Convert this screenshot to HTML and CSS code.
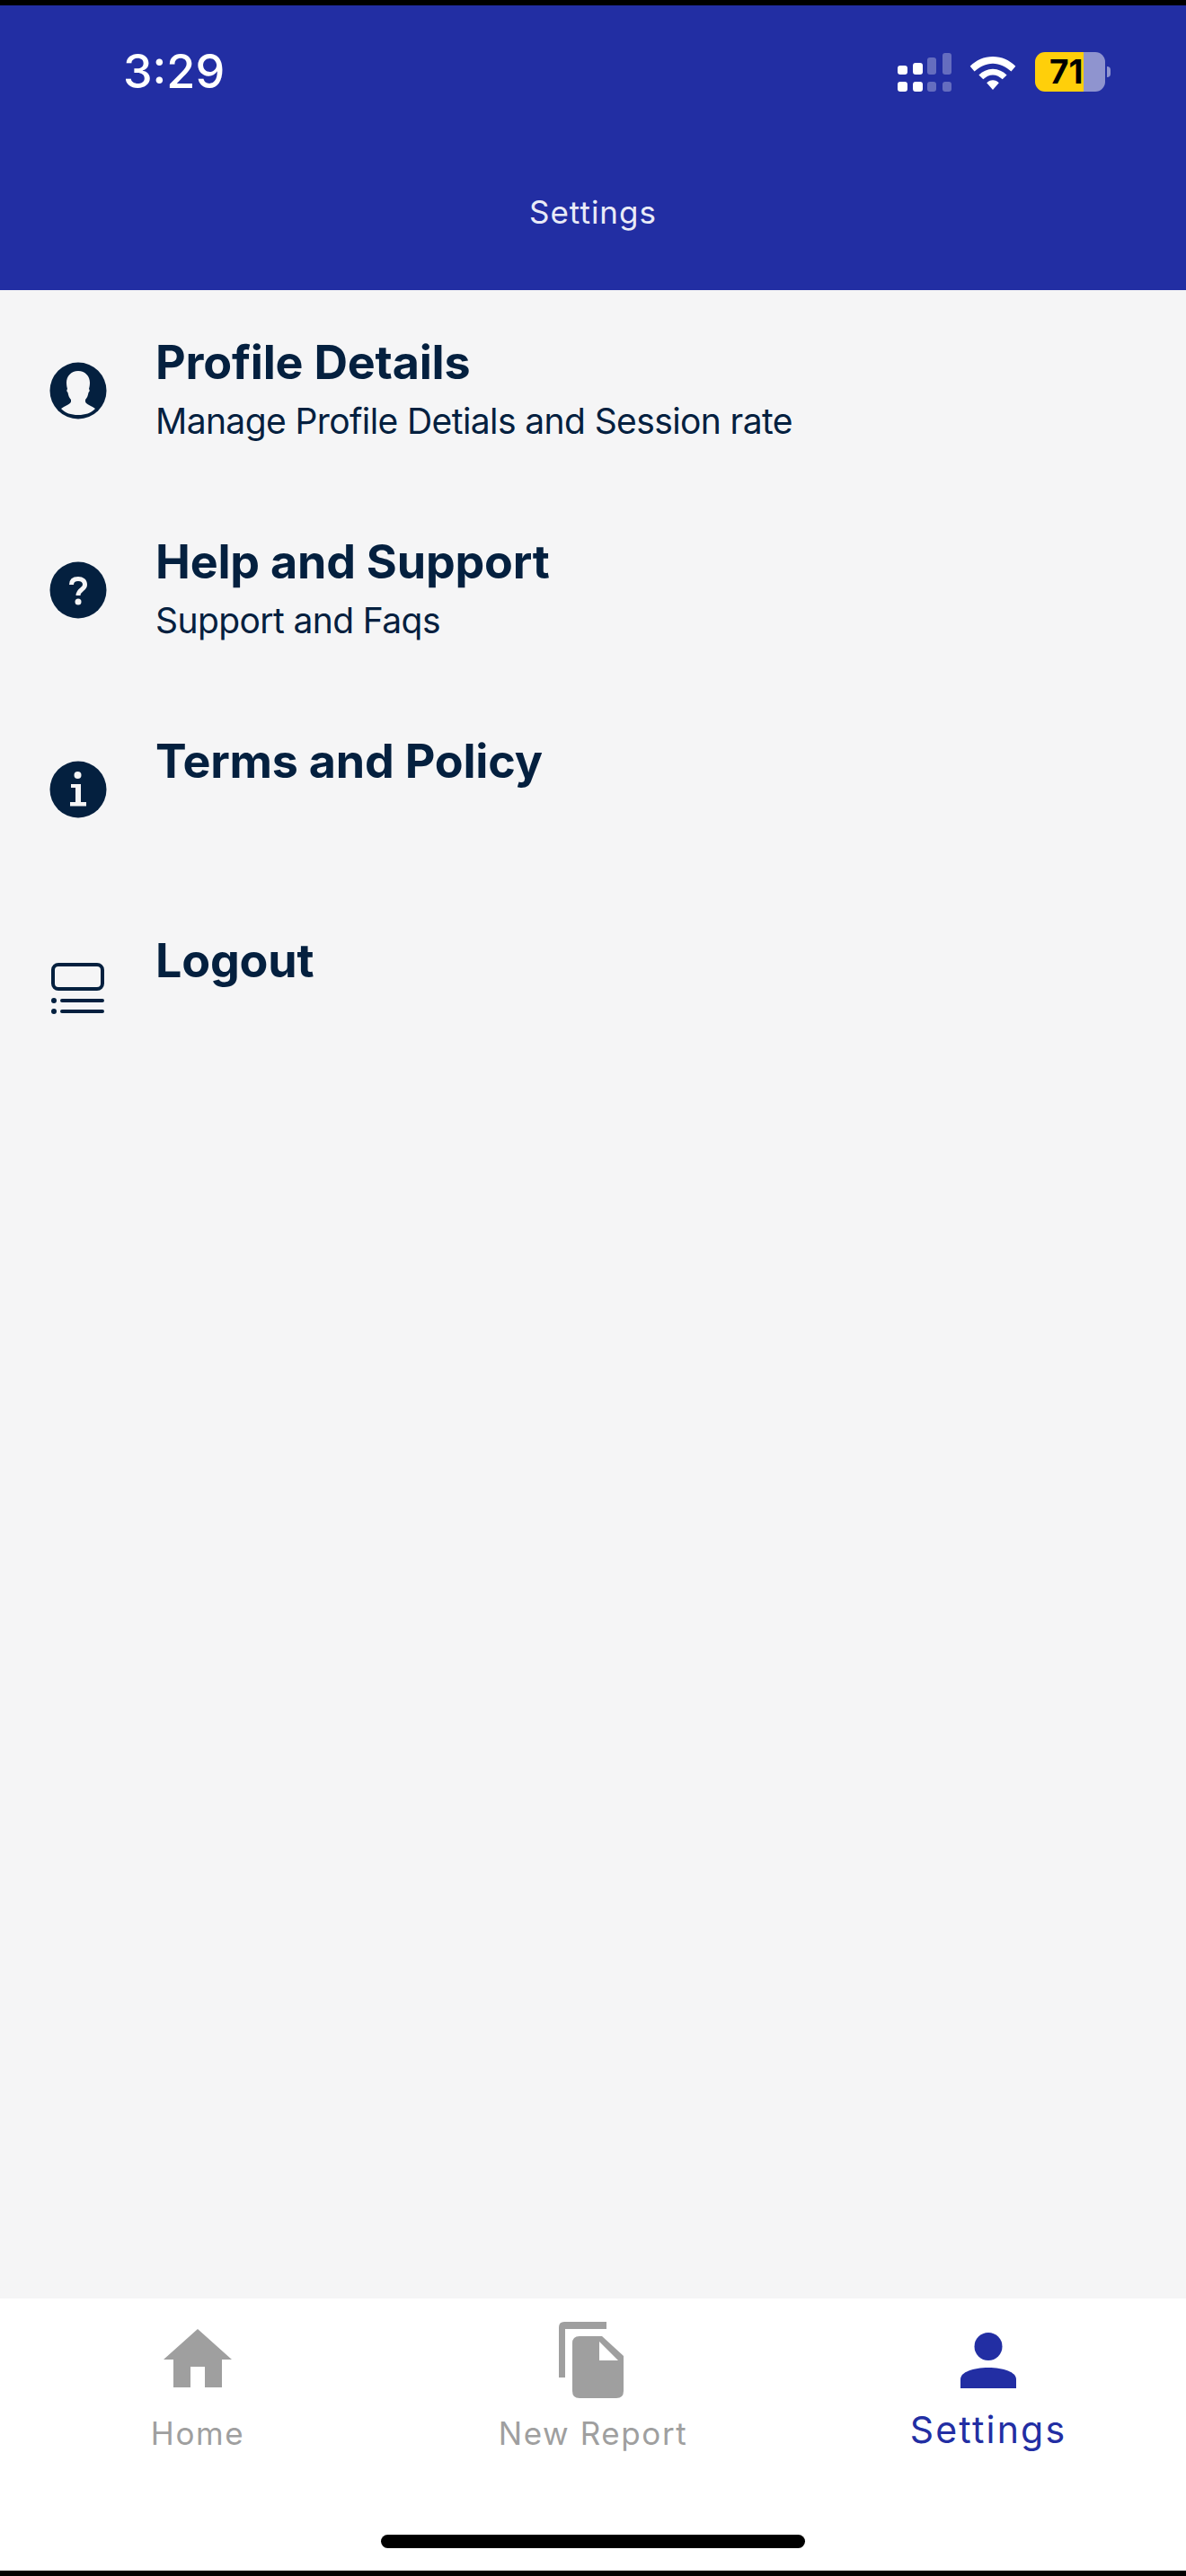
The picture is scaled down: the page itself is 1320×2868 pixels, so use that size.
FILE: index.html
```html
<!DOCTYPE html>
<html lang="en">
<head>
<meta charset="utf-8">
<title>Settings</title>
<link rel="stylesheet" href="styles.css">
</head>
<body>
<div class="screen">
  <header class="top">
    <div class="status">
      <span class="time">3:29</span>
      <div class="status-icons">
        <svg class="signal" width="60" height="43" viewBox="0 0 60 43">
          <g fill="#fff">
            <rect x="0" y="14" width="11" height="10" rx="3"/><rect x="17" y="11" width="11" height="13" rx="3"/>
            <rect x="0" y="32" width="11" height="11" rx="3"/><rect x="17" y="32" width="11" height="11" rx="3"/>
          </g>
          <g fill="#fff" opacity=".3">
            <rect x="33" y="5" width="10" height="19" rx="3"/><rect x="50" y="0" width="10" height="24" rx="3"/>
            <rect x="33" y="32" width="10" height="11" rx="3"/><rect x="50" y="32" width="10" height="11" rx="3"/>
          </g>
        </svg>
        <svg class="wifi" width="52" height="37" viewBox="0 0 52 38">
          <path fill="#fff" d="M26 0C16 0 7 4 0 11l5 6c6-5 13-9 21-9s15 4 21 9l5-6C45 4 36 0 26 0z"/>
          <path fill="#fff" d="M26 14c-6 0-12 3-16 7l5 5c3-3 7-5 11-5s8 2 11 5l5-5c-4-4-10-7-16-7z"/>
          <path fill="#fff" d="M26 27c-3 0-5 1-7 3l7 8 7-8c-2-2-4-3-7-3z"/>
        </svg>
        <div class="battery">
          <div class="batt-body"><span class="batt-num">71</span></div>
          <span class="batt-cap"></span>
        </div>
      </div>
    </div>
    <h1 class="title">Settings</h1>
  </header>

  <main class="list">
    <div class="row">
      <svg class="icon" width="66" height="66" viewBox="0 0 66 66">
        <circle cx="33" cy="33" r="31.5" fill="#04203f"/>
        <path fill="#f5f5f6" d="M33 11C25 11 20 17 20 24C20 27 20.500 29 21 31C20 32 20 34 21.500 35C22 38 23 41 25 43V45C25 47 21 49 17 51L14 53C19 58 25 60 33 60C41 60 47 58 52 53L49 51C45 49 41 47 41 45V43C43 41 44 38 44.500 35C46 34 46 32 45 31C45.500 29 46 27 46 24C46 17 41 11 33 11Z"/>
      </svg>
      <div class="text">
        <h2 class="head">Profile Details</h2>
        <p class="sub">Manage Profile Detials and Session rate</p>
      </div>
    </div>
    <div class="row">
      <svg class="icon" width="66" height="66" viewBox="0 0 66 66">
        <circle cx="33" cy="33" r="31.5" fill="#04203f"/>
        <path fill="none" stroke="#f5f5f6" stroke-width="5" d="M25.500 27c0-4.500 3-6.500 7.500-6.500s7.500 2.500 7.500 6.500c0 5.500-7.500 5-7.500 12"/>
        <circle cx="33" cy="46" r="3.500" fill="#f5f5f6"/>
      </svg>
      <div class="text">
        <h2 class="head">Help and Support</h2>
        <p class="sub">Support and Faqs</p>
      </div>
    </div>
    <div class="row">
      <svg class="icon" width="66" height="66" viewBox="0 0 66 66">
        <circle cx="33" cy="33" r="31.5" fill="#04203f"/>
        <circle cx="32.500" cy="17" r="4" fill="#f5f5f6"/>
        <path fill="#f5f5f6" d="M25 27h11v20h6v4.500H24V47h6V31h-5z"/>
      </svg>
      <div class="text"><h2 class="head">Terms and Policy</h2></div>
    </div>
    <div class="row">
      <svg class="icon" width="66" height="66" viewBox="0 0 66 66">
        <rect x="5" y="6" width="55" height="27" rx="6" fill="none" stroke="#04203f" stroke-width="4"/>
        <circle cx="6" cy="46" r="3" fill="#04203f"/><circle cx="6" cy="58" r="3" fill="#04203f"/>
        <path stroke="#04203f" stroke-width="4" stroke-linecap="round" d="M15 46h45M15 58h45"/>
      </svg>
      <div class="text"><h2 class="head">Logout</h2></div>
    </div>
  </main>

  <nav class="nav">
    <div class="tabs">
      <div class="tab tab-home">
        <svg width="76" height="66" viewBox="0 0 76 66">
          <path fill="#9f9f9f" d="M38 0 76 34H65V65H46V42H30V65H11V34H0z"/>
        </svg>
        <span class="tab-label">Home</span>
      </div>
      <div class="tab tab-report">
        <svg width="72" height="86" viewBox="0 0 72 86">
          <path fill="#9f9f9f" d="M53 0v8H7v54H0V6q0-6 6-6z"/>
          <path fill="#9f9f9f" fill-rule="evenodd" d="M23 16H48L72 38V77q0 8-8 8H23q-8 0-8-8V24q0-8 8-8zM45 22V43H66z"/>
        </svg>
        <span class="tab-label">New Report</span>
      </div>
      <div class="tab tab-active">
        <svg width="62" height="62" viewBox="0 0 62 62">
          <circle cx="31" cy="15.500" r="15.500" fill="#222ea3"/>
          <path fill="#222ea3" d="M0 62V52C0 44 14 39 31 39s31 5 31 13v10z"/>
        </svg>
        <span class="tab-label">Settings</span>
      </div>
    </div>
    <span class="home-bar"></span>
  </nav>
</div>
</body>
</html>
```
FILE: styles.css
```css
* { box-sizing: border-box; }
html, body { margin: 0; padding: 0; }
body { background: #000; font-family: Inter, "Liberation Sans", sans-serif; }
.screen { width: 1320px; height: 2868px; border-top: 6px solid #000; border-bottom: 6px solid #000; display: flex; flex-direction: column; background: #f5f5f6; overflow: hidden; }
.top { height: 317px; background: #222ea3; color: #fff; display: flex; flex-direction: column; }
.status { height: 132px; padding: 44px 84px 0 137px; display: flex; justify-content: space-between; align-items: flex-start; }
.time { font-size: 52px; line-height: 60px; font-weight: 500; }
.status-icons { display: flex; align-items: flex-start; gap: 20px; }
.signal { margin-top: 9px; }
.wifi { margin-top: 13px; }
.battery { display: flex; align-items: center; gap: 2px; margin-top: 8px; margin-left: 1px; }
.batt-body { width: 78px; height: 44px; border-radius: 11px; padding-left: 16px; background: linear-gradient(90deg, #ffcf0a 0 69%, #8f94cf 69% 100%); color: #000; display: flex; align-items: center; }
.batt-num { font-size: 37px; line-height: 44px; font-weight: 700; }
.batt-cap { width: 4px; height: 12px; background: #8f94cf; border-radius: 0 6px 6px 0; }
.title { margin: 73px 0 0; font-size: 35px; line-height: 50px; font-weight: 400; text-align: center; letter-spacing: 1px; color: #e9ebf7; }
.list { flex: 1; padding-top: 50px; display: flex; flex-direction: column; }
.row { height: 222px; padding-left: 54px; display: flex; align-items: flex-start; }
.icon { margin-top: 29px; flex: none; }
.text { margin-left: 53px; color: #04203f; }
.head { margin: 0; font-size: 52px; line-height: 62px; font-weight: 700; letter-spacing: -.2px; }
.sub { margin: 9px 0 0; font-size: 39px; line-height: 50px; font-weight: 400; letter-spacing: -.6px; }
.nav { height: 303px; background: #fff; display: flex; flex-direction: column; align-items: center; }
.tabs { width: 100%; height: 263px; display: flex; }
.tab { flex: 1; display: flex; flex-direction: column; align-items: center; color: #9f9f9f; }
.tab svg { flex: none; }
.tab-label { font-size: 35px; line-height: 42px; letter-spacing: 1.6px; }
.tab-home { padding-top: 34px; }
.tab-home .tab-label { margin-top: 29px; }
.tab-report { padding-top: 26px; }
.tab-report svg { margin-right: 4px; }
.tab-report .tab-label { margin-top: 17px; }
.tab-active { padding-top: 38px; color: #222ea3; }
.tab-active .tab-label { font-size: 41px; line-height: 50px; letter-spacing: 2.200px; margin-top: 21px; }
.home-bar { width: 472px; height: 15px; background: #000; border-radius: 8px; }
```
